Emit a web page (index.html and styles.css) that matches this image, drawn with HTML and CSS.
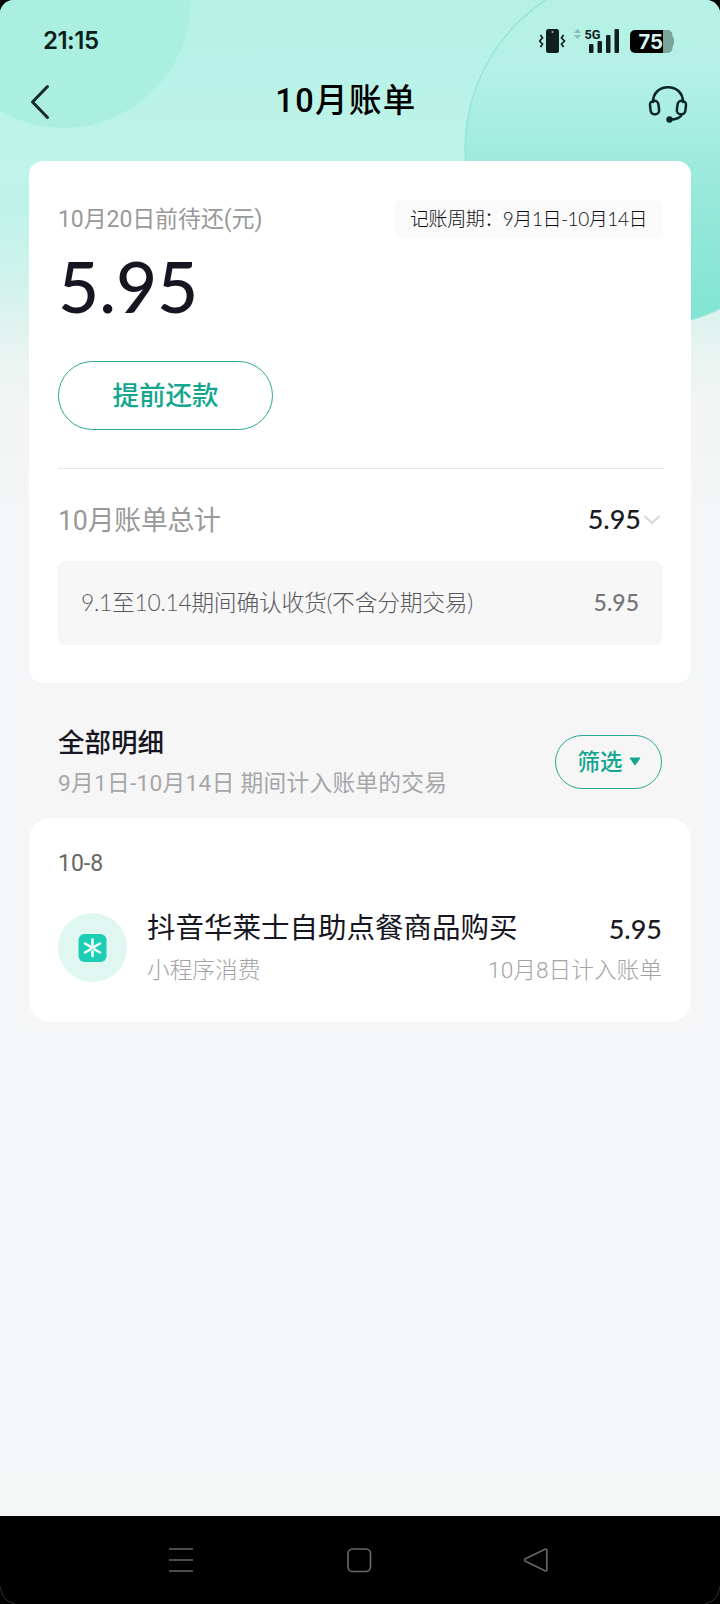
FILE: index.html
```html
<!DOCTYPE html>
<html lang="zh-CN">
<head>
<meta charset="utf-8">
<title>10月账单</title>
<link rel="stylesheet" href="styles.css">
</head>
<body>
<div class="screen">
  <svg class="backdrop" width="720" height="400" viewBox="0 0 720 400" aria-hidden="true">
    <defs>
      <linearGradient id="bubble" x1="0" y1="0" x2="0" y2="1">
        <stop offset="0" stop-color="#b7f1e6"/>
        <stop offset=".27" stop-color="#b5f1e6"/>
        <stop offset=".55" stop-color="#9deadc"/>
        <stop offset="1" stop-color="#80e4d1"/>
      </linearGradient>
    </defs>
    <circle cx="63.500" cy="1" r="127" fill="#abefe1"/>
    <circle cx="642.5" cy="149" r="177.5" fill="url(#bubble)" stroke="#96e6d8" stroke-width="1.500"/>
  </svg>

  <div class="status">
    <span class="clock">21:15</span>
    <svg class="status-icons" width="138" height="30" viewBox="0 0 138 30">
      <rect x="7" y="4" width="13" height="24" rx="2.5" fill="#10201e"/>
      <circle cx="13.500" cy="7" r="1" fill="#8fbdb4"/>
      <path d="M2 10l2 3-3 3 3 3-2 3M25 10l-2 3 3 3-3 3 2 3" transform="translate(-.5 0)" fill="none" stroke="#10201e" stroke-width="1.7"/>
      <path d="M35 8l3.500-4 3.500 4zM35 10h7l-3.500 4z" fill="#87beb4"/>
      <g fill="#10201e">
        <rect x="50" y="19" width="4.500" height="9" rx="1"/>
        <rect x="58.500" y="16" width="4.500" height="12" rx="1"/>
        <rect x="67" y="10" width="4.500" height="18" rx="1"/>
        <rect x="75.500" y="4" width="4.500" height="24" rx="1"/>
      </g>
      <text class="net" x="45.500" y="13.500" textLength="16" lengthAdjust="spacingAndGlyphs">5G</text>
      <path d="M124 5h4.500a5 5 0 0 1 5 5v1.500q1.500 1 1.500 5t-1.500 5v1.500a5 5 0 0 1-5 5H124z" fill="#79a39b"/>
      <path d="M124 5h-28a5 5 0 0 0-5 5v13a5 5 0 0 0 5 5h28z" fill="#000"/>
      <text class="charge" x="99.500" y="24" textLength="24.500" lengthAdjust="spacingAndGlyphs">75</text>
    </svg>
  </div>

  <header class="header">
    <svg class="back" width="20" height="36" viewBox="0 0 20 36"><path d="M17.500 2.500 2.500 18l15 15.500" fill="none" stroke="#17292d" stroke-width="3" stroke-linecap="round" stroke-linejoin="round"/></svg>
    <h1 class="title">10月账单</h1>
    <svg class="service" width="40" height="38" viewBox="0 0 40 38" fill="none" stroke="#0b2528" stroke-width="2.500">
      <path d="M5 17C5 8 11.500 2.200 20 2.200S35 8 35 17" stroke-linecap="round"/>
      <rect x="2.300" y="15.800" width="8.500" height="13.500" rx="4" transform="rotate(-7 6.500 22.500)"/>
      <rect x="29.200" y="15.800" width="8.500" height="13.500" rx="4" transform="rotate(7 33.500 22.500)"/>
      <path d="M34 29c-1.500 4-5 5.500-12 5.500"/>
      <circle cx="21.500" cy="34.500" r="3.200" fill="#0b2528" stroke="none"/>
    </svg>
  </header>

  <main class="sheet">
    <section class="card bill">
      <div class="row due-row">
        <span class="due-label">10月20日前待还(元)</span>
        <span class="period">记账周期：9月1日-10月14日</span>
      </div>
      <div class="due">5.95</div>
      <button class="repay">提前还款</button>
      <hr class="divider">
      <div class="row total-row">
        <span class="total-label">10月账单总计</span>
        <span class="total"><span class="amount">5.95</span><svg width="21" height="12" viewBox="0 0 21 12"><path d="m3.500 3 7.500 7 7.500-7" fill="none" stroke="#d9d9d9" stroke-width="2.200"/></svg></span>
      </div>
      <div class="row breakdown">
        <span class="break-label">9.1至10.14期间确认收货(不含分期交易)</span>
        <span class="break-amount">5.95</span>
      </div>
    </section>

    <div class="row details">
      <div>
        <h2 class="details-title">全部明细</h2>
        <p class="details-range">9月1日-10月14日 期间计入账单的交易</p>
      </div>
      <button class="filter">筛选<svg width="14" height="10" viewBox="0 0 14 10"><path d="M2 1h10L7 8z" fill="#14a68f" stroke="#14a68f" stroke-linejoin="round"/></svg></button>
    </div>

    <section class="card list">
      <div class="date">10-8</div>
      <div class="item">
        <svg class="item-icon" width="69" height="69" viewBox="0 0 69 69">
          <circle cx="34.500" cy="34.500" r="34.500" fill="#e0f7f1"/>
          <rect x="20.500" y="21" width="28" height="28" rx="6" fill="#1dceb4"/>
          <path d="M34.500 26.500v7.500M34.500 38.500v4.500M27 30.500l7.500 4.300 7.500-4.300M27 39.500l5.500-3.200M42 39.500l-5.500-3.200" fill="none" stroke="#f4fffc" stroke-width="2.500" stroke-linecap="round"/>
        </svg>
        <div class="item-body">
          <div class="row item-main"><span class="item-name">抖音华莱士自助点餐商品购买</span><span class="amount">5.95</span></div>
          <div class="row item-sub"><span>小程序消费</span><span>10月8日计入账单</span></div>
        </div>
      </div>
    </section>
  </main>

  <div class="safe-area"></div>
</div>
<nav class="nav">
  <svg width="720" height="88" viewBox="0 0 720 88" fill="none" stroke="#666" stroke-width="1.700">
    <path d="M169 33h24M169 44h24M169 55h24"/>
    <rect x="348" y="33" width="22.500" height="22.500" rx="4.500"/>
    <path d="M545 33.300 525.500 42.800q-2 1.200 0 2.400L545 54.700q1.800.8 1.800-1.200v-19q0-2-1.800-1.200z"/>
    <path d="M.5 71q1 14 14 16.500M719.500 71q-1 14-14 16.500" stroke="#333" stroke-width="1"/>
  </svg>
</nav>
</body>
</html>
```
FILE: styles.css
```css
* { box-sizing: border-box; }

body {
  margin: 0;
  width: 720px;
  height: 1604px;
  display: flex;
  flex-direction: column;
  background: #000;
  font-family: Roboto, "Noto Sans CJK SC", sans-serif;
  overflow: hidden;
}

h1, h2, p { margin: 0; font-weight: 400; }

button {
  margin: 0;
  padding: 0 0 4px;
  background: transparent;
  border: 1px solid #2ba893;
  color: #14a68f;
  font-family: inherit;
  display: flex;
  align-items: center;
  justify-content: center;
}

.screen {
  position: relative;
  height: 1516px;
  display: flex;
  flex-direction: column;
  border-radius: 14px 14px 0 0;
  overflow: hidden;
  background: linear-gradient(#b7f1e6 0, #b9f2e8 80px, #c0f4ea 170px, #bff3ea 210px, #d3f2ec 290px, #e8f4f1 350px, #f2f5f4 405px, #f4f5f5 490px, #f5f6f8 500px);
}

.backdrop { position: absolute; left: 0; top: 0; }

.status, .header, .sheet { position: relative; }

.status {
  height: 72px;
  padding: 25px 43px 0 43px;
  display: flex;
  justify-content: space-between;
}

.clock { font: 600 24px/32px Inter, sans-serif; letter-spacing: -0.5px; color: #0c1f1c; }
.net { font: 700 13px Roboto, sans-serif; fill: #10201e; }
.charge { font: 700 20px Inter, sans-serif; fill: #d8f5ef; }

.header {
  height: 89px;
  padding: 0 32px 0 30px;
  display: flex;
  justify-content: space-between;
}

.back { margin-top: 12px; }
.title { font-size: 32.500px; line-height: 44px; margin: 7px 0 0; padding-right: 6px; letter-spacing: 1.400px; font-weight: 500; color: #000; }
.service { margin-top: 13px; }

.sheet { margin: 0 29px; height: 866px; background: linear-gradient(transparent 520px, #f6f6f7 522px); }
.card { background: #fff; padding: 0 29px; }
.row { display: flex; justify-content: space-between; align-items: center; }

.bill { height: 522px; padding-top: 38px; border-radius: 14px; }
.due-row { height: 40px; }
.due-label { font-size: 23px; letter-spacing: -0.1px; color: #999; padding-bottom: 5px; }
.period {
  height: 38px;
  padding: 0 15px;
  border-radius: 6px;
  background: #fafafa;
  color: #0c0c14;
  font: 300 19px/38px Lato, "Noto Sans CJK SC", sans-serif;
  letter-spacing: -0.450px;
}
.due { height: 122px; font: 500 71px/94px Lato, sans-serif; color: #161622; }
.repay { width: 215px; height: 69px; border-radius: 35px; font-size: 26.500px; font-weight: 500; }
.divider { width: 606px; height: 1px; margin: 38px 0 0; border: 0; background: #e8e8e8; }
.total-row { height: 92px; padding-top: 8px; }
.total-label { font-size: 26.800px; letter-spacing: -0.200px; color: #999; padding-bottom: 2px; }
.total { display: flex; align-items: center; }
.amount { font: 500 27px/36px Lato, sans-serif; color: #1a1a22; }
.breakdown { height: 84px; padding: 0 23px 2px; border-radius: 7px; background: #f7f7f7; color: #73737a; }
.break-label { font: 300 22.800px/34px Lato, "Noto Sans CJK SC", sans-serif; letter-spacing: -0.270px; color: #58585e; }
.break-amount { font: 500 23px/34px Lato, sans-serif; }

.details { height: 135px; padding: 22px 29px 0; align-items: flex-start; }
.details-title { font-size: 26.500px; line-height: 40px; margin-top: 18px; font-weight: 500; color: #161622; }
.details-range { font-size: 22.700px; line-height: 42px; letter-spacing: 0.280px; color: #a6a6a9; }
.filter { width: 107px; height: 54px; margin-top: 30px; border-radius: 27px; font-size: 22.500px; font-weight: 500; gap: 5px; padding-left: 2px; }
.filter svg { margin-top: 4px; }

.list { height: 204px; padding-top: 30px; border-radius: 21px; }
.date { font-size: 23px; line-height: 32px; color: #666; }
.item { display: flex; gap: 20px; margin-top: 33px; }
.item-body { flex: 1; }
.item-main { height: 32px; }
.item-name { font-size: 28.500px; line-height: 32px; color: #161622; }
.item-sub { height: 47px; font-size: 22.700px; color: #a3a3a6; font-weight: 300; }

.safe-area { margin-top: auto; height: 41px; background: #f5f7f6; }

.nav { height: 88px; background: #000; }
```
